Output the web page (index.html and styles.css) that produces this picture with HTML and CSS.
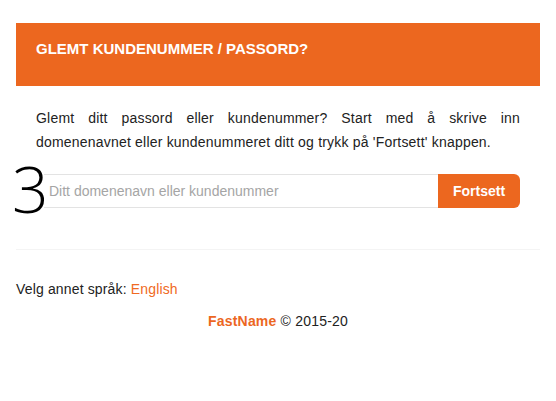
FILE: index.html
```html
<!DOCTYPE html>
<html lang="no">
<head>
    <meta charset="UTF-8">
    <meta name="viewport" content="width=device-width, initial-scale=1.0">
    <title>Glemt kundenummer / passord</title>
    <link rel="stylesheet" href="styles.css">
</head>
<body>
    <div class="container">
        <div class="panel-heading">
            <h2>GLEMT KUNDENUMMER / PASSORD?</h2>
        </div>
        <div class="panel-body">
            <p>Glemt ditt passord eller kundenummer? Start med å skrive inn domenenavnet eller kundenummeret ditt og trykk på 'Fortsett' knappen.</p>
            <form class="lookup-form">
                <span class="step">3</span>
                <input type="text" name="lookup" placeholder="Ditt domenenavn eller kundenummer">
                <button type="submit" class="btn-submit">Fortsett</button>
            </form>
        </div>
        <hr class="divider">
        <div class="language">Velg annet språk: <a href="#">English</a></div>
        <div class="footer"><span class="brand">FastName</span> &copy; 2015-20</div>
    </div>
</body>
</html>
```

FILE: styles.css
```css
/* Glemt passord side */
body {
    font-family: Arial, "Liberation Sans", sans-serif;
    background-color: #ffffff;
    color: #222;
    margin: 0;
    padding: 23px 16px 0;
}

.container {
    width: 100%;
}

.panel-heading {
    background-color: #ec671f;
    height: 63px;
    padding: 0 20px;
    box-sizing: border-box;
}

.panel-heading h2 {
    margin: 0;
    padding-top: 15px;
    font-size: 15px;
    line-height: 22px;
    font-weight: bold;
    color: #ffffff;
}

.panel-body {
    padding: 20px 20px 0;
}

.panel-body p {
    margin: 0 0 20px;
    font-size: 14px;
    line-height: 24px;
    letter-spacing: 0.2px;
    text-align: justify;
}

.lookup-form {
    display: flex;
    align-items: center;
    height: 34px;
    margin-left: -24px;
}

.step {
    font-family: "Open Sans", "DejaVu Sans", sans-serif;
    font-weight: 300;
    font-size: 64px;
    line-height: 34px;
    width: 32px;
    margin-top: -4px;
    letter-spacing: -2px;
    color: #000;
}

.lookup-form input[type="text"] {
    flex: 1;
    height: 34px;
    box-sizing: border-box;
    border: none;
    border-top: 1px solid #e3e3e3;
    border-bottom: 1px solid #e3e3e3;
    padding: 0 5px;
    font-family: Arial, "Liberation Sans", sans-serif;
    font-size: 14px;
    color: #333;
    outline: none;
}

.lookup-form input::placeholder {
    color: #a5a5a5;
}

.btn-submit {
    width: 82px;
    height: 34px;
    background-color: #ec671f;
    color: #ffffff;
    border: none;
    border-radius: 0 6px 6px 0;
    font-family: Arial, "Liberation Sans", sans-serif;
    font-size: 14px;
    font-weight: bold;
    cursor: pointer;
}

.divider {
    border: none;
    border-top: 1px solid #f4f4f4;
    margin: 41px 0 0;
}

.language {
    margin-top: 29px;
    font-size: 14px;
    line-height: 20px;
    letter-spacing: 0.15px;
}

.language a {
    color: #f06a22;
    text-decoration: none;
}

.footer {
    margin-top: 12px;
    text-align: center;
    font-size: 14px;
    line-height: 20px;
    letter-spacing: 0.2px;
}

.brand {
    color: #ec671f;
    font-weight: bold;
}
```
